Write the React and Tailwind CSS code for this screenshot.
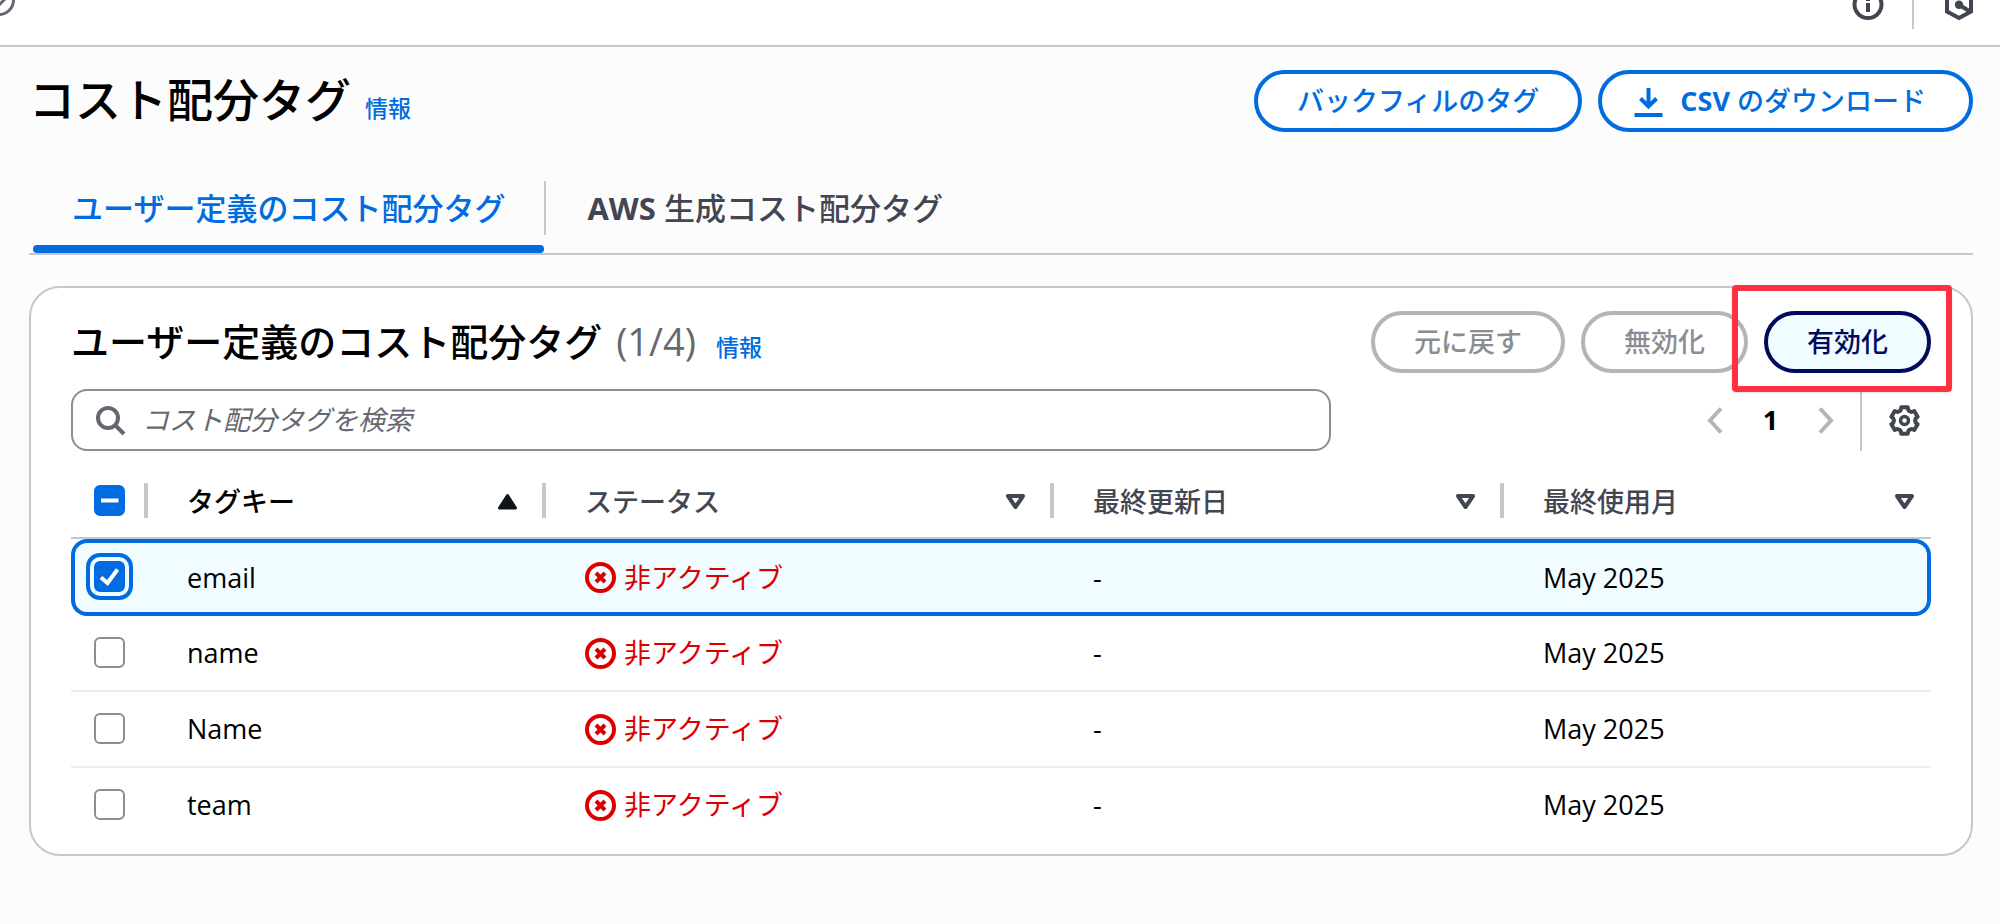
import { useEffect, useRef } from "react";

const rows = [
  { key: "email", updated: "-", used: "May 2025", selected: true },
  { key: "name", updated: "-", used: "May 2025", selected: false },
  { key: "Name", updated: "-", used: "May 2025", selected: false },
  { key: "team", updated: "-", used: "May 2025", selected: false },
];

const columns = [
  { label: "タグキー", sorted: true, width: "w-[398px]" },
  { label: "ステータス", sorted: false, width: "w-[508px]" },
  { label: "最終更新日", sorted: false, width: "w-[450px]" },
  { label: "最終使用月", sorted: false, width: "" },
];

// Outline of a six-lobed gear in a 31 x 31 box.
function gearPath() {
  const at = (deg, r) => {
    const a = (deg * Math.PI) / 180;
    return (15.5 + r * Math.sin(a)).toFixed(2) + " " + (15.5 - r * Math.cos(a)).toFixed(2);
  };
  let d = "M" + at(-14, 13.6);
  for (let i = 0; i < 6; i++) {
    const t = i * 60;
    d += "L" + at(t + 14, 13.6) + "Q" + at(t + 20, 10.2) + " " + at(t + 30, 10.8);
    d += "Q" + at(t + 40, 10.2) + " " + at(t + 46, 13.6);
  }
  return d + "Z";
}

function TopBar() {
  return (
    <header className="flex h-[47px] items-start justify-between overflow-hidden border-b-2 border-[#c6c6cd] bg-white">
      <svg className="h-5 w-5" viewBox="0 0 20 20" fill="none" stroke="#656871" strokeWidth="3" aria-hidden="true">
        <circle cx="-1" cy="0" r="14.500" />
        <path d="M5 -1L-1 5" />
      </svg>
      <div className="flex items-start pr-[25px]">
        <svg className="h-[21px] w-8" viewBox="0 11 32 21" fill="none" stroke="#424650" strokeWidth="4" aria-hidden="true">
          <circle cx="16" cy="15.500" r="13.500" />
          <path d="M16 8V12M16 14V23" />
          <path d="M14 15H16" strokeWidth="2" />
        </svg>
        <div className="ml-[28px] h-[29px] w-0.5 bg-[#c6c6cd]" />
        <svg className="ml-[29px] h-[21px] w-8" viewBox="0 11 32 21" fill="none" stroke="#424650" strokeWidth="4" aria-hidden="true">
          <path d="M4 6V22.500L16 29L28 22.500V6" />
          <circle cx="16" cy="15.700" r="4.200" fill="#424650" stroke="none" />
          <path d="M16 15.700L27 22.500" />
        </svg>
      </div>
    </header>
  );
}

function Checkbox({ label, checked, indeterminate, focused }) {
  const ref = useRef(null);
  useEffect(() => {
    ref.current.indeterminate = Boolean(indeterminate);
  }, [indeterminate]);
  const filled = checked || indeterminate;
  return (
    <span className="grid size-[31px]">
      <input
        ref={ref}
        type="checkbox"
        aria-label={label}
        defaultChecked={checked}
        className={
          "col-start-1 row-start-1 size-[31px] appearance-none rounded-md border-2 " +
          (filled ? "border-[#006ce0] bg-[#006ce0] " : "border-[#8c8c94] bg-white ") +
          (focused ? "outline-4 outline-offset-4 outline-[#006ce0]" : "outline-none")
        }
      />
      {filled && (
        <svg
          className="pointer-events-none col-start-1 row-start-1 size-[31px]"
          viewBox="0 0 31 31"
          fill="none"
          stroke="#fff"
          strokeWidth="4"
          aria-hidden="true"
        >
          {indeterminate ? <path d="M7 15.500H24.500" /> : <path d="M7 16.500L13.500 22L23.500 8.500" />}
        </svg>
      )}
    </span>
  );
}

function SortIcon({ sorted }) {
  return sorted ? (
    <svg className="size-[31px]" viewBox="0 0 31 31" fill="#0f141a" stroke="#0f141a" strokeWidth="3" strokeLinejoin="round" aria-hidden="true">
      <path d="M15.500 9.500L23.500 22H7.500Z" />
    </svg>
  ) : (
    <svg className="size-[31px]" viewBox="0 0 31 31" fill="none" stroke="#424650" strokeWidth="4" strokeLinejoin="round" aria-hidden="true">
      <path d="M8 10H23L15.500 21Z" />
    </svg>
  );
}

function Status() {
  return (
    <span className="flex items-center gap-2 text-[#db0000]">
      <svg className="size-[31px]" viewBox="0 0 31 31" fill="none" stroke="currentColor" strokeWidth="4" aria-hidden="true">
        <circle cx="15.500" cy="15.500" r="13.500" />
        <path d="M11 11L20 20M20 11L11 20" />
      </svg>
      <span>非アクティブ</span>
    </span>
  );
}

function PillButton({ tone, children }) {
  const tones = {
    normal: "border-[#006ce0] bg-white text-[#006ce0] px-[39px]",
    icon: "border-[#006ce0] bg-white text-[#006ce0] pl-[31px] pr-[43px]",
    disabled: "border-[#b4b4bb] bg-white text-[#8c8c94] px-[39px]",
    hover: "border-[#000b5e] bg-[#f0fcff] text-[#000b5e] px-[39px]",
  };
  return (
    <button
      type="button"
      disabled={tone === "disabled"}
      className={
        "flex h-[62px] shrink-0 items-center gap-4 whitespace-nowrap rounded-full border-4 text-[27px] leading-[38px] font-medium " + tones[tone]
      }
    >
      {children}
    </button>
  );
}

function InfoLink() {
  return (
    <a href="#info" className="text-[23px] leading-[31px] font-medium text-[#006ce0]">
      情報
    </a>
  );
}

function Toolbar() {
  return (
    <div className="mt-4 flex items-center justify-between">
      <label className="flex h-[62px] w-[1260px] items-center gap-4 rounded-2xl border-2 border-[#8c8c94] pl-[22px]">
        <svg className="size-[31px] shrink-0" viewBox="0 0 31 31" fill="none" stroke="#656871" strokeWidth="4" aria-hidden="true">
          <circle cx="13" cy="13" r="10" />
          <path d="M20 20L29 29" />
        </svg>
        <input
          type="search"
          aria-label="コスト配分タグを検索"
          placeholder="コスト配分タグを検索"
          className="min-w-0 flex-1 bg-transparent text-[27px] leading-[38px] outline-none placeholder:text-[#656871] placeholder:italic"
        />
      </label>
      <div className="flex items-center">
        <button type="button" disabled aria-label="前のページ">
          <svg className="size-[31px]" viewBox="0 0 31 31" fill="none" stroke="#b4b4bb" strokeWidth="4" aria-hidden="true">
            <path d="M21 3.500L10 15.500L21 27.500" />
          </svg>
        </button>
        <button type="button" className="w-[79px] text-center text-[27px] leading-[38px] font-bold text-black">
          1
        </button>
        <button type="button" disabled aria-label="次のページ">
          <svg className="size-[31px]" viewBox="0 0 31 31" fill="none" stroke="#b4b4bb" strokeWidth="4" aria-hidden="true">
            <path d="M10 3.500L21 15.500L10 27.500" />
          </svg>
        </button>
        <div className="ml-[19px] h-[62px] w-0.5 bg-[#c6c6cd]" />
        <button type="button" aria-label="設定" className="pr-[11px] pl-[27px]">
          <svg className="size-[31px]" viewBox="0 0 31 31" fill="none" stroke="#424650" strokeWidth="4" strokeLinejoin="round" aria-hidden="true">
            <path d={gearPath()} />
            <circle cx="15.500" cy="15.500" r="4" strokeWidth="3.500" />
          </svg>
        </button>
      </div>
    </div>
  );
}

function TagTable() {
  return (
    <table className="mt-3 w-full table-fixed border-separate border-spacing-0 text-left text-[27px] leading-[38px]">
      <thead>
        <tr className="h-[76px]">
          <th className="w-[77px] border-b-2 border-[#c6c6cd] p-0">
            <div className="flex items-center justify-between pl-[23px]">
              <Checkbox label="すべて選択" indeterminate />
              <span className="h-[35px] w-1 bg-[#c6c6cd]" />
            </div>
          </th>
          {columns.map((c, i) => (
            <th key={c.label} className={"border-b-2 border-[#c6c6cd] p-0 pl-[39px] font-medium " + c.width}>
              <div className={"flex items-center " + (c.sorted ? "text-black" : "text-[#424650]")}>
                <span className="flex-1 pt-[3px]">{c.label}</span>
                <button
                  type="button"
                  aria-label={c.label + "で並べ替え"}
                  className={i === 3 ? "mr-[11px] pt-0.5" : "mr-[19px] pt-0.5"}
                >
                  <SortIcon sorted={c.sorted} />
                </button>
                {i < 3 && <span className="h-[35px] w-1 bg-[#c6c6cd]" />}
              </div>
            </th>
          ))}
        </tr>
      </thead>
      <tbody>
        {rows.map((r, i) => {
          const edge = r.selected
            ? "border-y-4 border-[#006ce0] bg-[#f0fcff] "
            : i < rows.length - 1
              ? "border-b-2 border-[#ebebf0] "
              : "";
          return (
            <tr key={r.key} className={r.selected ? "h-[77px]" : i === rows.length - 1 ? "h-[74px]" : "h-[76px]"}>
              <td className={edge + (r.selected ? "rounded-l-2xl border-l-4 p-0 pb-[3px] pl-[19px]" : "p-0 pb-0.5 pl-[23px]")}>
                <Checkbox label={r.key} checked={r.selected} focused={r.selected} />
              </td>
              <td className={edge + "p-0 pl-[39px]"}>{r.key}</td>
              <td className={edge + "p-0 pl-[39px]"}>
                <Status />
              </td>
              <td className={edge + "p-0 pl-[39px]"}>{r.updated}</td>
              <td className={edge + (r.selected ? "rounded-r-2xl border-r-4 p-0 pl-[39px]" : "p-0 pl-[39px]")}>{r.used}</td>
            </tr>
          );
        })}
      </tbody>
    </table>
  );
}

export default function App() {
  return (
    <div lang="ja" className="min-h-screen bg-[#fcfcfd] font-['Open_Sans','Noto_Sans_CJK_JP',sans-serif] text-black">
      <TopBar />
      <main className="pt-[23px] pr-[27px] pb-16 pl-[29px]">
        <div className="flex items-center justify-between">
          <div className="flex items-baseline gap-3.5 pb-1">
            <h1 className="text-[46px] leading-[58px] font-medium">コスト配分タグ</h1>
            <InfoLink />
          </div>
          <div className="flex gap-4">
            <PillButton tone="normal">バックフィルのタグ</PillButton>
            <PillButton tone="icon">
              <svg className="size-[31px]" viewBox="0 0 31 31" fill="none" stroke="currentColor" strokeWidth="4" aria-hidden="true">
                <path d="M15.500 2V20M7.500 12.500L15.500 20.500L23.500 12.500M1.500 29H29.500" />
              </svg>
              <span>
                <span className="font-bold">CSV</span> のダウンロード
              </span>
            </PillButton>
          </div>
        </div>

        <div role="tablist" className="mt-[31px] flex h-[92px] items-stretch border-b-2 border-[#c6c6cd] pl-1 text-[31px] leading-[38px] font-medium">
          <button
            type="button"
            role="tab"
            aria-selected="true"
            className="flex flex-col items-stretch text-[#006ce0]"
          >
            <span className="flex h-[82px] items-center px-[39px] pt-[7px]">ユーザー定義のコスト配分タグ</span>
            <span className="h-2 rounded-full bg-[#006ce0]" />
          </button>
          <span className="my-[18px] w-0.5 bg-[#c6c6cd]" />
          <button type="button" role="tab" aria-selected="false" className="px-[41px] text-[#424650]">
            <span className="font-bold">AWS</span> 生成コスト配分タグ
          </button>
        </div>

        <section className="mt-[31px] rounded-[31px] border-2 border-[#c6c6cd] bg-white px-10 pt-[23px] pb-3">
          <div className="flex items-center justify-between">
            <div className="flex items-baseline gap-5 pb-0.5">
              <h2 className="text-[38px] leading-[46px] font-medium">
                ユーザー定義のコスト配分タグ <span className="ml-1 font-normal text-[#656871]">(1/4)</span>
              </h2>
              <InfoLink />
            </div>
            <div className="flex gap-4">
              <PillButton tone="disabled">元に戻す</PillButton>
              <PillButton tone="disabled">無効化</PillButton>
              <div className="relative">
                <PillButton tone="hover">有効化</PillButton>
                <div className="pointer-events-none absolute -top-[26px] -right-[21px] -bottom-[19px] -left-8 rounded-sm border-[6px] border-[#ff3040] shadow-sm" />
              </div>
            </div>
          </div>
          <Toolbar />
          <TagTable />
        </section>
      </main>
    </div>
  );
}
